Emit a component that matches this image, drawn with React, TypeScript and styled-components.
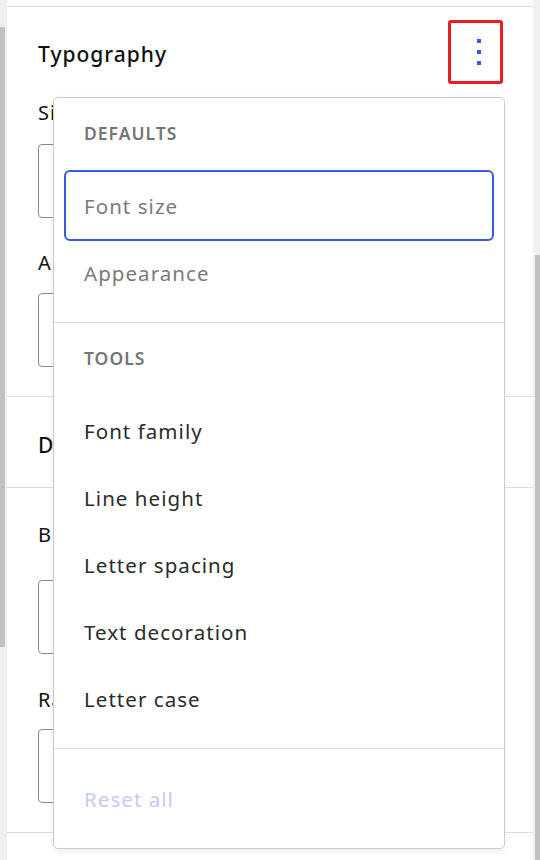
import React from "react";
import styled, { createGlobalStyle } from "styled-components";

const GlobalStyle = createGlobalStyle`
  html, body {
    margin: 0;
    padding: 0;
    background: #f0f0f0;
  }
  body {
    font-family: "Noto Sans", "Open Sans", Arial, sans-serif;
    color: #1e1e1e;
  }
`;

const Page = styled.div`
  position: relative;
  display: flex;
  width: 540px;
  height: 860px;
  overflow: hidden;
`;

const Gutter = styled.div<{ $width: number }>`
  width: ${(p) => p.$width}px;
  flex-shrink: 0;
  background: #f0f0f0;
`;

const Thumb = styled.div<{ $top: number; $height: number; $side: "left" | "right" }>`
  width: 5px;
  margin-top: ${(p) => p.$top}px;
  height: ${(p) => p.$height}px;
  background: #c1c1c1;
  margin-left: ${(p) => (p.$side === "right" ? "2px" : "0")};
`;

const Sidebar = styled.div`
  flex: 1;
  background: #fff;
  display: flex;
  flex-direction: column;
`;

const Section = styled.div<{ $pt: number; $pb: number }>`
  padding: ${(p) => p.$pt}px 30px ${(p) => p.$pb}px 31px;
  border-bottom: 1px solid #dedede;
`;

const Header = styled.div`
  display: flex;
  align-items: center;
  justify-content: space-between;
  height: 64px;
`;

const Title = styled.h2`
  margin: 0;
  padding-top: 3px;
  font-size: 21px;
  font-weight: 500;
  letter-spacing: 1px;
  line-height: 28px;
  color: #111;
`;

const MenuButton = styled.button`
  width: 55px;
  height: 64px;
  box-sizing: border-box;
  border: 3px solid #ed1c24;
  border-radius: 3px;
  background: #fff;
  padding: 0 0 0 6px;
  display: flex;
  align-items: center;
  justify-content: center;
`;

const FieldLabel = styled.div<{ $mt: number }>`
  margin-top: ${(p) => p.$mt}px;
  font-size: 20px;
  letter-spacing: 1px;
  line-height: 28px;
  color: #111;
`;

const InputBox = styled.div<{ $mt: number }>`
  margin-top: ${(p) => p.$mt}px;
  height: 74px;
  box-sizing: border-box;
  border: 1px solid #8a8a8a;
  border-radius: 4px;
`;

const Dropdown = styled.div`
  position: absolute;
  left: 53px;
  top: 97px;
  width: 452px;
  box-sizing: border-box;
  background: #fff;
  border: 1px solid #cccccc;
  border-radius: 5px;
  box-shadow: 0 2px 6px rgba(0, 0, 0, 0.08);
`;

const Group = styled.div<{ $pt: number; $pb: number }>`
  padding: ${(p) => p.$pt}px 12px ${(p) => p.$pb}px;
  & + & {
    border-top: 1px solid #dcdcdc;
  }
`;

const GroupHeading = styled.div`
  height: 40px;
  margin-bottom: 19px;
  padding-left: 18px;
  display: flex;
  align-items: center;
  font-size: 17.5px;
  font-weight: 600;
  letter-spacing: 1px;
  text-transform: uppercase;
  color: #757575;
`;

type Tone = "default" | "muted" | "link";

const toneColor: Record<Tone, string> = {
  default: "#2b2b2b",
  muted: "#7a7a7a",
  link: "#c3cbf7",
};

const Item = styled.div<{ $tone: Tone; $focused?: boolean }>`
  height: 67px;
  display: flex;
  align-items: center;
  padding-left: 18px;
  font-size: 20.5px;
  letter-spacing: 1.05px;
  color: ${(p) => toneColor[p.$tone]};
  border-radius: 4px;
  outline: ${(p) => (p.$focused ? "2px solid #3858e9" : "none")};
  outline-offset: 0;
`;

const MoreVertical = () => (
  <svg width="4" height="26" viewBox="0 0 4 26" fill="#3858e9">
    <rect x="0" y="0" width="4" height="4" />
    <rect x="0" y="11" width="4" height="4" />
    <rect x="0" y="22" width="4" height="4" />
  </svg>
);

const defaults = ["Font size", "Appearance"];
const tools = [
  "Font family",
  "Line height",
  "Letter spacing",
  "Text decoration",
  "Letter case",
];

const App = () => {
  return (
    <>
      <GlobalStyle />
      <Page>
        <Gutter $width={7}>
          <Thumb $side="left" $top={27} $height={620} />
        </Gutter>
        <Sidebar>
          <Section $pt={6} $pb={0} />
          <Section $pt={13} $pb={29}>
            <Header>
              <Title>Typography</Title>
              <MenuButton aria-label="Typography options">
                <MoreVertical />
              </MenuButton>
            </Header>
            <FieldLabel $mt={15}>Size</FieldLabel>
            <InputBox $mt={17} />
            <FieldLabel $mt={31}>Appearance</FieldLabel>
            <InputBox $mt={16} />
          </Section>
          <Section $pt={31} $pb={28}>
            <Title>Dimensions</Title>
          </Section>
          <Section $pt={33} $pb={29}>
            <FieldLabel $mt={0}>Block spacing</FieldLabel>
            <InputBox $mt={31} />
            <FieldLabel $mt={32}>Radius</FieldLabel>
            <InputBox $mt={15} />
          </Section>
        </Sidebar>
        <Gutter $width={7}>
          <Thumb $side="right" $top={255} $height={605} />
        </Gutter>

        <Dropdown role="menu">
          <Group $pt={15} $pb={16}>
            <GroupHeading>Defaults</GroupHeading>
            {defaults.map((label, i) => (
              <Item key={label} $tone="muted" $focused={i === 0}>
                {label}
              </Item>
            ))}
          </Group>
          <Group $pt={15} $pb={16}>
            <GroupHeading>Tools</GroupHeading>
            {tools.map((label) => (
              <Item key={label} $tone="default">
                {label}
              </Item>
            ))}
          </Group>
          <Group $pt={16} $pb={16}>
            <Item $tone="link">Reset all</Item>
          </Group>
        </Dropdown>
      </Page>
    </>
  );
};

export default App;
